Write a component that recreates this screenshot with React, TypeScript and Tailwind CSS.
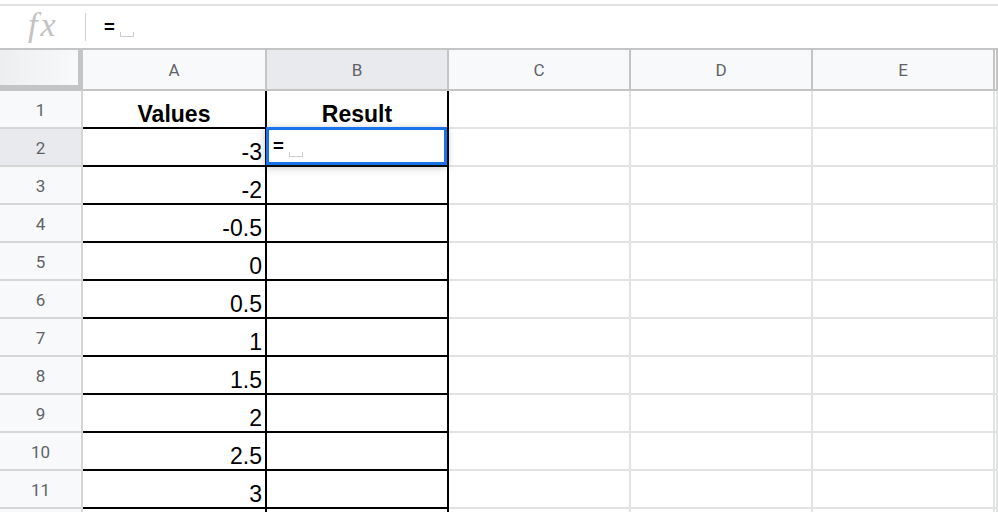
import React from "react";

const columns = ["A", "B", "C", "D", "E", ""];
const values = ["-3", "-2", "-0.5", "0", "0.5", "1", "1.5", "2", "2.5", "3", ""];

const gridCols = "grid grid-cols-[83px_184px_182px_182px_182px_182px_1fr]";

// little grey "space" marker Sheets shows after the cursor
function SpaceMark({ className = "" }: { className?: string }) {
    return <span className={`relative inline-block w-[14px] h-[5px] border-l border-r border-b border-[#cccccc] ${className}`} />;
}

function FormulaBar() {
    return (
        <div className="pt-[4px] bg-white">
            <div className="flex items-center h-[44px] border-t-2 border-[#e1e1e1]">
                <div className="w-[85px] pl-[28px] flex items-center">
                    <span className="font-['Liberation_Serif',serif] italic text-[34px] leading-none tracking-[3px] text-[#c2c2c2] -mt-[4px]">
                        fx
                    </span>
                </div>
                <div className="w-px h-[28px] bg-[#cfcfcf]" />
                <div className="flex items-center pl-[17px] font-['Roboto',sans-serif] text-[23px] leading-none text-black">
                    <span className="relative top-0">=</span>
                    <SpaceMark className="ml-[4px] top-[7px]" />
                </div>
            </div>
        </div>
    );
}

function HeaderRow() {
    return (
        <div className={`${gridCols} h-[43px] border-t-2 border-[#c4c4c4] bg-[#f8f9fa]`}>
            <div className="border-r-[5px] border-b-[6px] border-[#c4c4c4] bg-gradient-to-r from-[#eceef0] to-[#f8f9fa]" />
            {columns.map((col, i) => (
                <div
                    key={i}
                    className={`flex items-center justify-center pt-[2px] border-b-2 border-r-2 border-[#c4c4c4] font-['Roboto',sans-serif] text-[17px] text-[#5f6368] ${col === "B" ? "bg-[#e8eaed]" : ""}`}
                >
                    {col}
                </div>
            ))}
        </div>
    );
}

function DataRow({ n, value }: { n: number; value: string }) {
    const isHeader = n === 1;
    const selected = n === 2;
    return (
        <div className={`${gridCols} h-[38px]`}>
            <div
                className={`flex items-center justify-center pt-[4px] border-b-2 border-r-2 border-[#d6d6d6] font-['Roboto',sans-serif] text-[17px] text-[#5f6368] ${selected ? "bg-[#e8eaed]" : "bg-[#f8f9fa]"}`}
            >
                {n <= 11 ? n : ""}
            </div>
            {/* column A */}
            <div
                className={`flex items-end pb-[1px] border-b-2 border-r-2 border-black font-['Liberation_Sans',Arial,sans-serif] text-[23px] leading-none text-black ${isHeader ? "justify-center font-bold" : "justify-end pr-[3px]"}`}
            >
                {isHeader ? "Values" : value}
            </div>
            {/* column B */}
            <div
                className={`relative flex items-end justify-center pb-[1px] border-b-2 border-r-2 border-black font-['Liberation_Sans',Arial,sans-serif] text-[23px] leading-none font-bold text-black ${selected ? "z-10" : ""}`}
            >
                {isHeader && "Result"}
                {selected && (
                    <div className="absolute -top-[2px] -left-px right-0 bottom-0 border-[3px] border-[#1a73e8] bg-white shadow-[0_2px_8px_rgba(60,64,67,0.35)]">
                        <div className="flex items-center h-full pl-[3px] font-['Roboto',sans-serif] font-normal text-[23px] leading-none text-black">
                            <span className="relative top-0">=</span>
                            <SpaceMark className="ml-[4px] top-[8px]" />
                        </div>
                    </div>
                )}
            </div>
            {[0, 1, 2, 3].map((i) => (
                <div key={i} className="border-b-2 border-r-2 border-[#e2e3e3] bg-white" />
            ))}
        </div>
    );
}

export default function App() {
    return (
        <div className="w-[998px] h-[512px] overflow-hidden bg-white">
            <FormulaBar />
            <HeaderRow />
            {Array.from({ length: 12 }, (_, i) => (
                <DataRow key={i} n={i + 1} value={values[i - 1] ?? ""} />
            ))}
        </div>
    );
}
